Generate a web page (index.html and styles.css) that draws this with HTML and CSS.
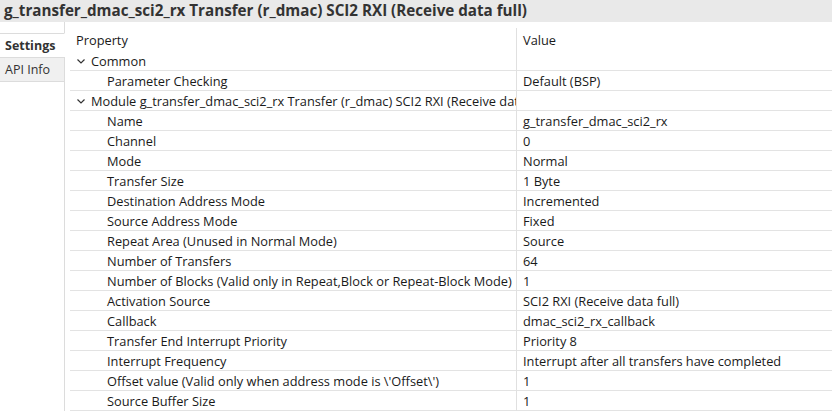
FILE: index.html
```html
<!DOCTYPE html>
<html>
<head>
<meta charset="utf-8">
<link rel="stylesheet" href="styles.css">
</head>
<body>
<div class="title">g_transfer_dmac_sci2_rx Transfer (r_dmac) SCI2 RXI (Receive data full)</div>
<div class="main">
  <div class="tabs">
    <div class="tab active">Settings</div>
    <div class="tab">API Info</div>
  </div>
  <div class="content">
    <div class="grid">
      <div class="hcell prop">Property</div>
      <div class="hcell val">Value</div>

      <div class="cell prop lvl0"><svg class="chev" width="8" height="5" viewBox="0 0 8 5"><path d="M0.5 0.5 L4 4 L7.5 0.5" fill="none" stroke="#333" stroke-width="1.2"/></svg>Common</div>
      <div class="cell val"></div>

      <div class="cell prop lvl1">Parameter Checking</div>
      <div class="cell val">Default (BSP)</div>

      <div class="cell prop lvl0"><svg class="chev" width="8" height="5" viewBox="0 0 8 5"><path d="M0.5 0.5 L4 4 L7.5 0.5" fill="none" stroke="#333" stroke-width="1.2"/></svg>Module g_transfer_dmac_sci2_rx Transfer (r_dmac) SCI2 RXI (Receive data full)</div>
      <div class="cell val"></div>

      <div class="cell prop lvl1">Name</div>
      <div class="cell val">g_transfer_dmac_sci2_rx</div>

      <div class="cell prop lvl1">Channel</div>
      <div class="cell val">0</div>

      <div class="cell prop lvl1">Mode</div>
      <div class="cell val">Normal</div>

      <div class="cell prop lvl1">Transfer Size</div>
      <div class="cell val">1 Byte</div>

      <div class="cell prop lvl1">Destination Address Mode</div>
      <div class="cell val">Incremented</div>

      <div class="cell prop lvl1">Source Address Mode</div>
      <div class="cell val">Fixed</div>

      <div class="cell prop lvl1">Repeat Area (Unused in Normal Mode)</div>
      <div class="cell val">Source</div>

      <div class="cell prop lvl1">Number of Transfers</div>
      <div class="cell val">64</div>

      <div class="cell prop lvl1">Number of Blocks (Valid only in Repeat,Block or Repeat-Block Mode)</div>
      <div class="cell val">1</div>

      <div class="cell prop lvl1">Activation Source</div>
      <div class="cell val">SCI2 RXI (Receive data full)</div>

      <div class="cell prop lvl1">Callback</div>
      <div class="cell val">dmac_sci2_rx_callback</div>

      <div class="cell prop lvl1">Transfer End Interrupt Priority</div>
      <div class="cell val">Priority 8</div>

      <div class="cell prop lvl1">Interrupt Frequency</div>
      <div class="cell val">Interrupt after all transfers have completed</div>

      <div class="cell prop lvl1">Offset value (Valid only when address mode is \'Offset\')</div>
      <div class="cell val">1</div>

      <div class="cell prop lvl1">Source Buffer Size</div>
      <div class="cell val">1</div>
    </div>
  </div>
</div>
</body>
</html>
```
FILE: styles.css
```css
html, body {
  margin: 0;
  padding: 0;
  background: #ffffff;
  overflow: hidden;
}
body {
  width: 832px;
  height: 411px;
  font-family: "Open Sans", "Noto Sans", sans-serif;
  font-size: 12.8px;
  color: #1a1a1a;
}
.title {
  height: 22px;
  background: #e9e9e9;
  color: #333333;
  font-weight: bold;
  font-size: 15.2px;
  line-height: 20px;
  padding-left: 4px;
  white-space: nowrap;
  overflow: hidden;
}
.main {
  display: flex;
  height: 389px;
}
.tabs {
  width: 64px;
  border-right: 1px solid #dcdcdc;
  padding-top: 11px;
  flex-shrink: 0;
  font-size: 12.5px;
}
.tab {
  height: 23px;
  line-height: 23px;
  padding-left: 5px;
  background: #f0f0f0;
  color: #333333;
  border-top: 1px solid #dcdcdc;
  border-right: 1px solid #dcdcdc;
  margin-right: -1px;
}
.tab.active {
  background: #ffffff;
  font-weight: bold;
  border-right: 1px solid #ffffff;
  color: #333333;
}
.tab + .tab {
  border-bottom: 1px solid #dcdcdc;
}
.content {
  flex: 1;
  padding-left: 5px;
  padding-top: 6px;
  min-width: 0;
}
.grid {
  display: grid;
  grid-template-columns: 446px 1fr;
}
.hcell {
  height: 23px;
  line-height: 24px;
  white-space: nowrap;
}
.hcell.prop {
  padding-left: 6px;
}
.hcell.val {
  border-left: 1px solid #e0e0e0;
  padding-left: 6px;
}
.cell {
  height: 19px;
  line-height: 21px;
  border-bottom: 1px solid #e3e3e3;
  white-space: nowrap;
  overflow: hidden;
}
.cell.val {
  border-left: 1px solid #e0e0e0;
  padding-left: 6px;
}
.cell.lvl0 {
  padding-left: 7px;
}
.cell.lvl1 {
  padding-left: 37px;
}
.chev {
  margin-right: 6px;
  vertical-align: 2px;
}
```
